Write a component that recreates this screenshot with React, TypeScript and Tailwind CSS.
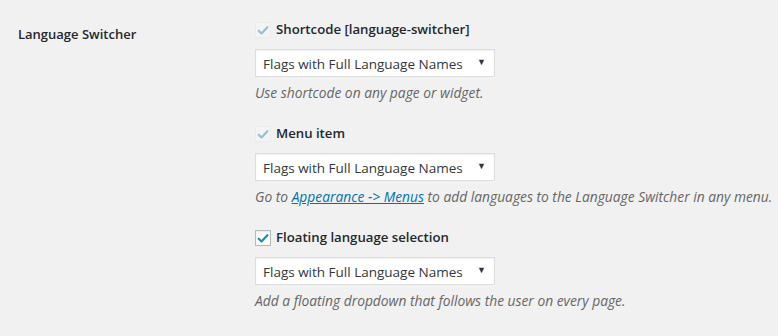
const options = ['Flags with Full Language Names', 'Full Language Names', 'Flags with Short Language Names', 'Short Language Names', 'Flags'];

function Check({ disabled }: { disabled?: boolean }) {
  return (
    <span
      className={
        'flex h-4 w-4 items-center justify-center border ' +
        (disabled ? 'border-[#ebebeb] bg-[#f4f4f4]' : 'border-[#b4b9be] bg-white shadow-[inset_0_1px_2px_rgba(0,0,0,0.1)]')
      }
    >
      <svg viewBox="0 0 16 16" className="h-[15px] w-[15px]">
        <path
          d="M3 8.2 L6.3 11.5 L13 4.2"
          fill="none"
          stroke={disabled ? '#8fc3db' : '#1e8cbe'}
          strokeWidth="2.5"
          strokeLinecap="round"
          strokeLinejoin="round"
        />
      </svg>
    </span>
  );
}

function Select() {
  return (
    <div className="relative mt-[11px] h-7 w-[240px] border border-[#ddd] bg-white shadow-[inset_0_1px_2px_rgba(0,0,0,0.07)]">
      <span className="absolute left-[7px] top-[4px] text-[13.5px] text-[#32373c]">{options[0]}</span>
      <span className="absolute right-[8px] top-[5px] text-[9px] text-[#32373c]">▼</span>
    </div>
  );
}

function Block({ label, disabled, children }: { label: string; disabled?: boolean; children: React.ReactNode }) {
  return (
    <div className="h-[104px]">
      <label className="flex h-4 items-center gap-[5px]">
        <Check disabled={disabled} />
        <span className="text-[13.2px] font-semibold text-[#23282d]">{label}</span>
      </label>
      <Select />
      <p className="mt-[6px] whitespace-nowrap text-[13.8px] italic text-[#666]">{children}</p>
    </div>
  );
}

export default function App() {
  return (
    <div className="h-[336px] w-[778px] overflow-hidden bg-[#f1f1f1] font-['Open_Sans',sans-serif]">
      <div className="flex pt-[22px]">
        <div className="w-[255px] pl-[18px] pt-[3px] text-[13px] font-semibold text-[#23282d]">Language Switcher</div>
        <div className="flex-1">
          <Block label="Shortcode [language-switcher]" disabled>
            Use shortcode on any page or widget.
          </Block>
          <Block label="Menu item" disabled>
            Go to <a className="text-[#0073aa] underline">Appearance -&gt; Menus</a> to add languages to the Language Switcher in any menu.
          </Block>
          <Block label="Floating language selection">
            Add a floating dropdown that follows the user on every page.
          </Block>
        </div>
      </div>
    </div>
  );
}
